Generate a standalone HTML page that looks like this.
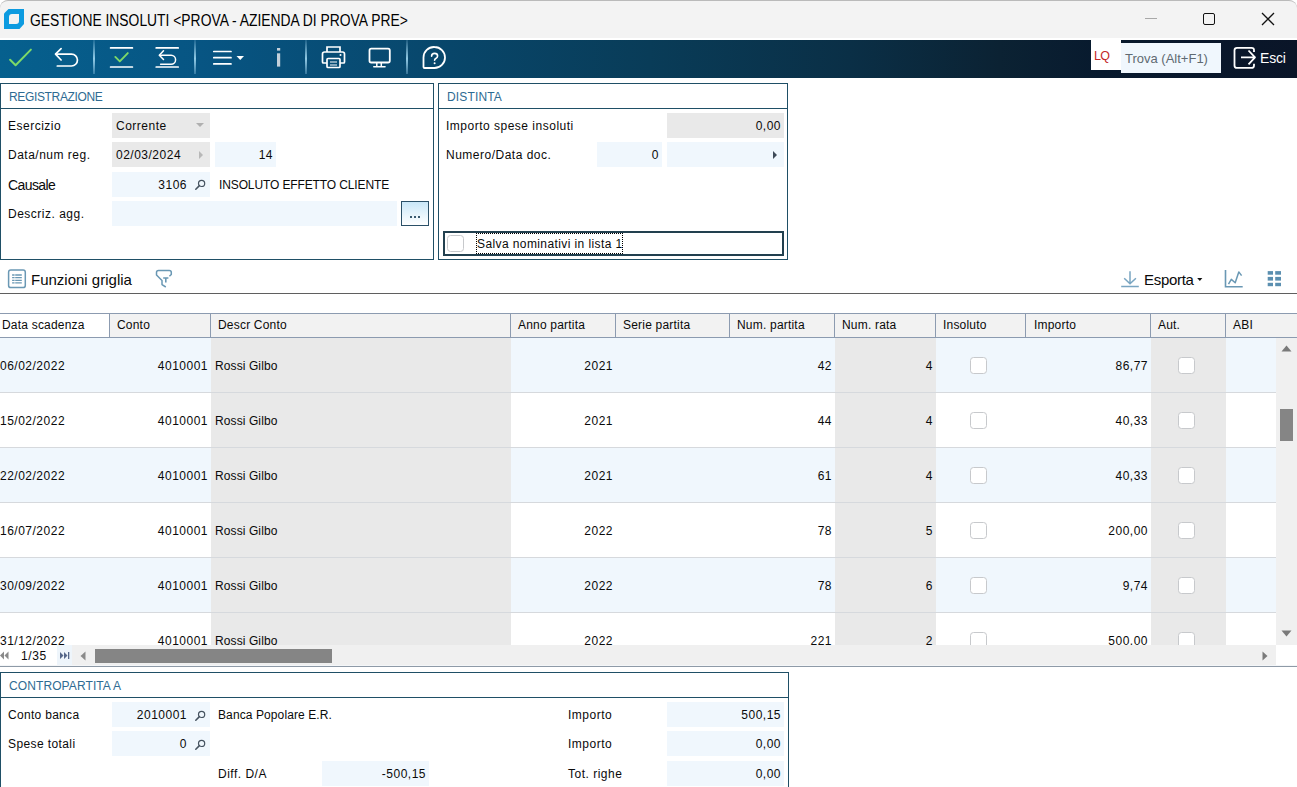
<!DOCTYPE html>
<html><head><meta charset="utf-8">
<style>
*{margin:0;padding:0;box-sizing:border-box}
html,body{width:1297px;height:787px;overflow:hidden;background:#fff;font-family:"Liberation Sans",sans-serif;color:#000}
.a{position:absolute}
.t{position:absolute;white-space:nowrap;font-size:12px;line-height:14px;letter-spacing:0.5px;color:#0a0a0a}
.r{text-align:right}
.cb{position:absolute;width:17px;height:17px;border:1.8px solid #c7c9cc;border-radius:3.5px;background:#fff}
.sep{position:absolute;top:40px;width:2px;height:34px;background:linear-gradient(180deg,rgba(160,210,240,0.15),rgba(160,215,240,0.9) 55%,rgba(160,210,240,0.3))}
</style></head><body>
<div class="a" style="left:0;top:0;width:1297px;height:38px;background:#f3f3f3;border-top:1px solid #bababa;border-radius:8px 8px 0 0"></div>
<svg class="a" style="left:0;top:0" width="30" height="36" viewBox="0 0 30 36"><path d="M8.5 9H24V24L19.5 29H4V13.5Z" fill="#0d9be0"/><path d="M12 14H19V21Q19 24 16 24H9V17Q9 14 12 14Z" fill="#f3f3f3"/></svg>
<div class="t" style="left:30px;top:11.5px;font-size:15.6px;line-height:18px;letter-spacing:0px;color:#000;transform:scaleX(0.889);transform-origin:0 0">GESTIONE INSOLUTI &lt;PROVA - AZIENDA DI PROVA PRE&gt;</div>
<div class="a" style="left:1145px;top:18px;width:12px;height:1px;background:#a8a8a8"></div>
<div class="a" style="left:1203px;top:13px;width:12px;height:12px;border:1.3px solid #111;border-radius:2px"></div>
<svg class="a" style="left:1261px;top:12px" width="14" height="14" viewBox="0 0 14 14"><path d="M1 1L13 13M13 1L1 13" stroke="#111" stroke-width="1.3"/></svg>
<div class="a" style="left:0;top:40px;width:1297px;height:38px;background:linear-gradient(90deg,#06608e 0px,#075583 200px,#08466a 450px,#093c58 650px,#0a2f46 850px,#0b2233 1000px,#081a2e 1100px,#0a1528 1297px)"></div>
<div class="sep" style="left:93px"></div>
<div class="sep" style="left:194px"></div>
<div class="sep" style="left:305px"></div>
<div class="sep" style="left:406px"></div>
<svg class="a" style="left:0;top:40px" width="460" height="38" viewBox="0 40 460 38">
 <path d="M10.1 59.7L15.6 65.2L30.9 49.6" fill="none" stroke="#7dd968" stroke-width="2" stroke-linecap="round" stroke-linejoin="round"/>
 <g fill="none" stroke="#fff" stroke-width="1.7" stroke-linecap="round" stroke-linejoin="round">
  <path d="M61.1 48.6L55.5 54.1L61.1 60"/><path d="M55.8 54.1H71.5A5.95 5.95 0 0 1 71.5 66H57.3"/>
  <path d="M110.6 47.9H132.4M110.6 67H132.4"/>
  <path d="M156.2 47.9H178.2M156.2 67H178.2"/>
 </g>
 <g fill="none" stroke="#fff" stroke-width="1.5" stroke-linecap="round" stroke-linejoin="round">
  <path d="M163.5 50.7L159.3 55.2L163.5 59.5"/><path d="M159.6 55.2H171.1A4.5 4.5 0 0 1 171.1 64.2H160.6"/>
 </g>
 <path d="M115.3 56.9L119.8 61.4L127.8 53.1" fill="none" stroke="#7dd968" stroke-width="1.9" stroke-linecap="round" stroke-linejoin="round"/>
 <g fill="none" stroke="#fff" stroke-width="1.7" stroke-linecap="round">
  <path d="M213.8 51.5H231M213.8 57.7H231M213.8 63.9H231"/>
 </g>
 <path d="M236.5 56H244L240.25 60Z" fill="#fff"/>
 <rect x="277" y="48" width="3.2" height="2.6" fill="#c3d0da"/><rect x="277" y="53.3" width="3.2" height="13.3" fill="#c3d0da"/>
 <g fill="none" stroke="#fff" stroke-width="1.7">
  <path d="M327 52V47H340V52"/>
  <path d="M327 63H323.5Q322.5 63 322.5 62V54Q322.5 52 324.5 52H342.5Q344.5 52 344.5 54V62Q344.5 63 343.5 63H340"/>
  <rect x="327" y="58.5" width="13" height="9" rx="1"/>
  <path d="M330 62H337M330 65H337" stroke-width="1.2"/>
 </g>
 <circle cx="340.5" cy="55" r="1" fill="#fff"/>
 <g fill="none" stroke="#fff" stroke-width="1.8">
  <rect x="369.5" y="48.7" width="20.3" height="13.8" rx="1.8"/>
  <path d="M376.8 63V66.5M381.3 63V66.5" stroke-width="1.5"/><path d="M373.8 66.8H385" stroke-linecap="round" stroke-width="1.6"/>
 </g>
 <g fill="none" stroke="#fff" stroke-width="1.8">
  <path d="M434.5 47A10.5 10.5 0 1 1 434.5 68H424.5Q423.5 68 423.5 67V57.5A10.5 10.5 0 0 1 434.5 47Z"/>
 </g>
 <path d="M431.6 56.2Q431.6 53.4 434.6 53.4Q437.6 53.4 437.6 56Q437.6 57.6 435.8 58.5Q434.6 59.1 434.6 60.2" fill="none" stroke="#fff" stroke-width="1.6" stroke-linecap="round"/><circle cx="434.6" cy="63.2" r="1" fill="#fff"/>
</svg>
<div class="a" style="left:1091px;top:40px;width:30px;height:30px;background:#fff"></div>
<div class="t" style="left:1094px;top:49px;font-size:12.5px;letter-spacing:-0.8px;color:#c42828">LQ</div>
<div class="a" style="left:1121px;top:43px;width:100px;height:30px;background:#f0f7fd"></div>
<div class="t" style="left:1125px;top:51px;font-size:13px;line-height:16px;letter-spacing:0px;color:#5f6a72">Trova (Alt+F1)</div>
<svg class="a" style="left:1232px;top:45px" width="26" height="26" viewBox="0 0 26 26"><g fill="none" stroke="#fff" stroke-width="1.8"><path d="M22 7V5Q22 2.8 19.5 2.8H5Q2.5 2.8 2.5 5.3V20.4Q2.5 22.9 5 22.9H19.5Q22 22.9 22 20.4V18.8"/><path d="M9 12.4H23M16.5 5.5L23 12.4L16.5 19.3" stroke-linejoin="round"/></g></svg>
<div class="t" style="left:1260px;top:49px;font-size:14px;line-height:18px;letter-spacing:-0.2px;color:#fff">Esci</div>
<div class="a" style="left:0px;top:83px;width:434px;height:177px;border:1px solid #1f4f66"></div>
<div class="a" style="left:1px;top:108px;width:432px;height:1px;background:#1f4f66"></div>
<div class="t" style="left:9px;top:90px;letter-spacing:-0.35px;color:#2e6b92">REGISTRAZIONE</div>
<div class="t" style="left:8px;top:119px">Esercizio</div>
<div class="a" style="left:112px;top:113px;width:98px;height:25px;background:#e9e9e9"></div>
<div class="t" style="left:116px;top:119px">Corrente</div>
<svg class="a" style="left:195px;top:122px" width="10" height="6"><path d="M1 1H9L5 5Z" fill="#b0b0b0"/></svg>
<div class="t" style="left:8px;top:148px">Data/num reg.</div>
<div class="a" style="left:112px;top:142px;width:98px;height:25px;background:#e9e9e9"></div>
<div class="t" style="left:116px;top:148px">02/03/2024</div>
<svg class="a" style="left:198px;top:150px" width="6" height="10"><path d="M1 1V9L5 5Z" fill="#b8b8b8"/></svg>
<div class="a" style="left:215px;top:142px;width:61px;height:25px;background:#f0f7fd"></div>
<div class="t r" style="left:215px;top:148px;width:58px">14</div>
<div class="t" style="left:8px;top:177px;font-size:14px;line-height:16px;letter-spacing:-0.6px">Causale</div>
<div class="a" style="left:112px;top:172px;width:98px;height:25px;background:#f0f7fd"></div>
<div class="t r" style="left:112px;top:178px;width:75px">3106</div>
<svg class="a" style="left:194px;top:178px" width="12" height="12" viewBox="0 0 12 12"><circle cx="7.6" cy="5.4" r="3.1" fill="none" stroke="#45525f" stroke-width="1.2"/><path d="M5.4 7.6L1.8 11.2" stroke="#45525f" stroke-width="1.5" stroke-linecap="round"/></svg>
<div class="t" style="left:219px;top:178px;letter-spacing:-0.12px">INSOLUTO EFFETTO CLIENTE</div>
<div class="t" style="left:8px;top:207px">Descriz. agg.</div>
<div class="a" style="left:112px;top:201px;width:285px;height:25px;background:#f0f7fd"></div>
<div class="a" style="left:401px;top:201px;width:28px;height:25px;border:1px solid #2a5068;background:linear-gradient(180deg,#c9e7f8,#ffffff)"></div>
<div class="a" style="left:410px;top:216px;width:2px;height:2px;background:#3a5a70"></div>
<div class="a" style="left:414px;top:216px;width:2px;height:2px;background:#3a5a70"></div>
<div class="a" style="left:418px;top:216px;width:2px;height:2px;background:#3a5a70"></div>
<div class="a" style="left:438px;top:83px;width:350px;height:177px;border:1px solid #1f4f66"></div>
<div class="a" style="left:439px;top:108px;width:348px;height:1px;background:#1f4f66"></div>
<div class="t" style="left:447px;top:90px;letter-spacing:0.15px;color:#2e6b92">DISTINTA</div>
<div class="t" style="left:446px;top:119px">Importo spese insoluti</div>
<div class="a" style="left:667px;top:113px;width:117px;height:25px;background:#e9e9e9"></div>
<div class="t r" style="left:667px;top:119px;width:114px">0,00</div>
<div class="t" style="left:446px;top:148px">Numero/Data doc.</div>
<div class="a" style="left:597px;top:142px;width:65px;height:25px;background:#f0f7fd"></div>
<div class="t r" style="left:597px;top:148px;width:62px">0</div>
<div class="a" style="left:667px;top:142px;width:117px;height:25px;background:#f0f7fd"></div>
<svg class="a" style="left:772px;top:150px" width="6" height="10"><path d="M1 1V9L5 5Z" fill="#3e4a58"/></svg>
<div class="a" style="left:443px;top:231px;width:341px;height:25px;border:2px solid #22404f"></div>
<div class="cb" style="left:447px;top:235px;width:17px;height:17px"></div>
<div class="a" style="left:476px;top:233px;width:147px;height:21px;border:1px dotted #000"></div>
<div class="t" style="left:477px;top:237px;letter-spacing:0.4px">Salva nominativi in lista 1</div>
<svg class="a" style="left:0;top:260px" width="30" height="32" viewBox="0 260 30 32"><rect x="8.6" y="270.1" width="16.7" height="17.5" rx="2.2" fill="none" stroke="#6a98b4" stroke-width="1.5"/><path d="M12.1 275H14.6M15.2 275H21.8M12.1 277.6H14.6M15.2 277.6H21.8M12.1 280.3H14.6M15.2 280.3H21.8M12.1 282.9H14.6M15.2 282.9H21.8" stroke="#6a98b4" stroke-width="1.3"/></svg>
<div class="t" style="left:31px;top:271px;font-size:15px;line-height:18px;letter-spacing:0px">Funzioni griglia</div>
<svg class="a" style="left:150px;top:265px" width="30" height="27" viewBox="150 265 30 27"><path d="M165.8 287L162 284.6V280.5L156.5 275V272.5Q156.5 270.5 158.5 270.5H169.3Q171.3 270.5 171.3 272.5V274.5L169.4 276.3" fill="none" stroke="#6a98b4" stroke-width="1.5" stroke-linejoin="round"/><path d="M163.2 278H168.4M165.8 278V282.5" stroke="#6a98b4" stroke-width="1.6"/></svg>
<svg class="a" style="left:1115px;top:265px" width="30" height="27" viewBox="1115 265 30 27"><path d="M1130 271.2V283.3M1124.2 278.2L1130 283.8L1135.9 278.2M1121.2 286.4H1138.8" fill="none" stroke="#79a5c1" stroke-width="1.5"/></svg>
<div class="t" style="left:1144px;top:271px;font-size:15px;line-height:18px;letter-spacing:-0.3px">Esporta</div>
<svg class="a" style="left:1196px;top:277px" width="8" height="5" viewBox="1196 277 8 5"><path d="M1197.2 278H1202.4L1199.8 281Z" fill="#111"/></svg>
<svg class="a" style="left:1218px;top:265px" width="30" height="27" viewBox="1218 265 30 27"><path d="M1225.5 270V286.8H1242.7" fill="none" stroke="#6a98b4" stroke-width="1.6"/><path d="M1228.5 284.2L1231.3 279.4L1235.2 282.8L1238.8 271.9L1241.6 275.6" fill="none" stroke="#6a98b4" stroke-width="1.5" stroke-linejoin="round"/></svg>
<svg class="a" style="left:1260px;top:265px" width="30" height="27" viewBox="1260 265 30 27"><g fill="#5b8fb0"><rect x="1267.7" y="271.1" width="5.3" height="3.6"/><rect x="1275.2" y="271.1" width="5.8" height="3.6"/><rect x="1267.7" y="276.9" width="5.3" height="3.7"/><rect x="1275.2" y="276.9" width="5.8" height="3.7"/><rect x="1267.7" y="282.8" width="5.3" height="3.4"/><rect x="1275.2" y="282.8" width="5.8" height="3.4"/></g></svg>
<div class="a" style="left:0px;top:293px;width:1297px;height:1px;background:#5f5f5f"></div>
<div class="a" style="left:0px;top:338px;width:1276px;height:54px;background:#f0f7fd"></div>
<div class="a" style="left:0px;top:393px;width:1276px;height:54px;background:#fff"></div>
<div class="a" style="left:0px;top:448px;width:1276px;height:54px;background:#f0f7fd"></div>
<div class="a" style="left:0px;top:503px;width:1276px;height:54px;background:#fff"></div>
<div class="a" style="left:0px;top:558px;width:1276px;height:54px;background:#f0f7fd"></div>
<div class="a" style="left:0px;top:613px;width:1276px;height:32px;background:#fff"></div>
<div class="a" style="left:211px;top:338px;width:300px;height:307px;background:#e9e9e9"></div>
<div class="a" style="left:835px;top:338px;width:101px;height:307px;background:#e9e9e9"></div>
<div class="a" style="left:1151px;top:338px;width:75px;height:307px;background:#e9e9e9"></div>
<div class="a" style="left:0px;top:392px;width:1276px;height:1px;background:#d6d9dd"></div>
<div class="a" style="left:0px;top:447px;width:1276px;height:1px;background:#d6d9dd"></div>
<div class="a" style="left:0px;top:502px;width:1276px;height:1px;background:#d6d9dd"></div>
<div class="a" style="left:0px;top:557px;width:1276px;height:1px;background:#d6d9dd"></div>
<div class="a" style="left:0px;top:612px;width:1276px;height:1px;background:#d6d9dd"></div>
<div class="a" style="left:0;top:313px;width:1297px;height:25px;background:#f2f2f2;border-top:1px solid #8c9bb0;border-bottom:1px solid #8c9bb0"></div>
<div class="a" style="left:0px;top:314px;width:109px;height:23px;background:#fff"></div>
<div class="a" style="left:109px;top:313px;width:1px;height:25px;background:#8c9bb0"></div>
<div class="a" style="left:210px;top:313px;width:1px;height:25px;background:#8c9bb0"></div>
<div class="a" style="left:510px;top:313px;width:1px;height:25px;background:#8c9bb0"></div>
<div class="a" style="left:615px;top:313px;width:1px;height:25px;background:#8c9bb0"></div>
<div class="a" style="left:729px;top:313px;width:1px;height:25px;background:#8c9bb0"></div>
<div class="a" style="left:834px;top:313px;width:1px;height:25px;background:#8c9bb0"></div>
<div class="a" style="left:935px;top:313px;width:1px;height:25px;background:#8c9bb0"></div>
<div class="a" style="left:1025px;top:313px;width:1px;height:25px;background:#8c9bb0"></div>
<div class="a" style="left:1150px;top:313px;width:1px;height:25px;background:#8c9bb0"></div>
<div class="a" style="left:1225px;top:313px;width:1px;height:25px;background:#8c9bb0"></div>
<div class="t" style="left:2px;top:318px;letter-spacing:0.2px">Data scadenza</div>
<div class="t" style="left:117px;top:318px;letter-spacing:0.2px">Conto</div>
<div class="t" style="left:218px;top:318px;letter-spacing:0.2px">Descr Conto</div>
<div class="t" style="left:518px;top:318px;letter-spacing:0.2px">Anno partita</div>
<div class="t" style="left:623px;top:318px;letter-spacing:0.2px">Serie partita</div>
<div class="t" style="left:737px;top:318px;letter-spacing:0.2px">Num. partita</div>
<div class="t" style="left:842px;top:318px;letter-spacing:0.2px">Num. rata</div>
<div class="t" style="left:943px;top:318px;letter-spacing:0.2px">Insoluto</div>
<div class="t" style="left:1034px;top:318px;letter-spacing:0.2px">Importo</div>
<div class="t" style="left:1158px;top:318px;letter-spacing:0.2px">Aut.</div>
<div class="t" style="left:1233px;top:318px;letter-spacing:0.2px">ABI</div>
<div class="t" style="left:0px;top:359px">06/02/2022</div>
<div class="t r" style="left:110px;top:359px;width:98px">4010001</div>
<div class="t" style="left:215px;top:359px;letter-spacing:0.1px">Rossi Gilbo</div>
<div class="t r" style="left:511px;top:359px;width:102px">2021</div>
<div class="t r" style="left:730px;top:359px;width:102px">42</div>
<div class="t r" style="left:835px;top:359px;width:98px">4</div>
<div class="t r" style="left:1026px;top:359px;width:122px">86,77</div>
<div class="cb" style="left:970px;top:357px"></div>
<div class="cb" style="left:1178px;top:357px"></div>
<div class="t" style="left:0px;top:414px">15/02/2022</div>
<div class="t r" style="left:110px;top:414px;width:98px">4010001</div>
<div class="t" style="left:215px;top:414px;letter-spacing:0.1px">Rossi Gilbo</div>
<div class="t r" style="left:511px;top:414px;width:102px">2021</div>
<div class="t r" style="left:730px;top:414px;width:102px">44</div>
<div class="t r" style="left:835px;top:414px;width:98px">4</div>
<div class="t r" style="left:1026px;top:414px;width:122px">40,33</div>
<div class="cb" style="left:970px;top:412px"></div>
<div class="cb" style="left:1178px;top:412px"></div>
<div class="t" style="left:0px;top:469px">22/02/2022</div>
<div class="t r" style="left:110px;top:469px;width:98px">4010001</div>
<div class="t" style="left:215px;top:469px;letter-spacing:0.1px">Rossi Gilbo</div>
<div class="t r" style="left:511px;top:469px;width:102px">2021</div>
<div class="t r" style="left:730px;top:469px;width:102px">61</div>
<div class="t r" style="left:835px;top:469px;width:98px">4</div>
<div class="t r" style="left:1026px;top:469px;width:122px">40,33</div>
<div class="cb" style="left:970px;top:467px"></div>
<div class="cb" style="left:1178px;top:467px"></div>
<div class="t" style="left:0px;top:524px">16/07/2022</div>
<div class="t r" style="left:110px;top:524px;width:98px">4010001</div>
<div class="t" style="left:215px;top:524px;letter-spacing:0.1px">Rossi Gilbo</div>
<div class="t r" style="left:511px;top:524px;width:102px">2022</div>
<div class="t r" style="left:730px;top:524px;width:102px">78</div>
<div class="t r" style="left:835px;top:524px;width:98px">5</div>
<div class="t r" style="left:1026px;top:524px;width:122px">200,00</div>
<div class="cb" style="left:970px;top:522px"></div>
<div class="cb" style="left:1178px;top:522px"></div>
<div class="t" style="left:0px;top:579px">30/09/2022</div>
<div class="t r" style="left:110px;top:579px;width:98px">4010001</div>
<div class="t" style="left:215px;top:579px;letter-spacing:0.1px">Rossi Gilbo</div>
<div class="t r" style="left:511px;top:579px;width:102px">2022</div>
<div class="t r" style="left:730px;top:579px;width:102px">78</div>
<div class="t r" style="left:835px;top:579px;width:98px">6</div>
<div class="t r" style="left:1026px;top:579px;width:122px">9,74</div>
<div class="cb" style="left:970px;top:577px"></div>
<div class="cb" style="left:1178px;top:577px"></div>
<div class="t" style="left:0px;top:634px">31/12/2022</div>
<div class="t r" style="left:110px;top:634px;width:98px">4010001</div>
<div class="t" style="left:215px;top:634px;letter-spacing:0.1px">Rossi Gilbo</div>
<div class="t r" style="left:511px;top:634px;width:102px">2022</div>
<div class="t r" style="left:730px;top:634px;width:102px">221</div>
<div class="t r" style="left:835px;top:634px;width:98px">2</div>
<div class="t r" style="left:1026px;top:634px;width:122px">500,00</div>
<div class="cb" style="left:970px;top:632px"></div>
<div class="cb" style="left:1178px;top:632px"></div>
<div class="a" style="left:0px;top:645px;width:1297px;height:22px;background:#fff"></div>
<div class="a" style="left:1276px;top:338px;width:21px;height:307px;background:#f0f0f0"></div>
<svg class="a" style="left:1281px;top:345px" width="11" height="7"><path d="M0.5 6.5H10.5L5.5 0.5Z" fill="#7a7a7a"/></svg>
<div class="a" style="left:1280px;top:409px;width:13px;height:32px;background:#858585"></div>
<svg class="a" style="left:1281px;top:630px" width="11" height="7"><path d="M0.5 0.5H10.5L5.5 6.5Z" fill="#7a7a7a"/></svg>
<div class="a" style="left:72px;top:645px;width:1204px;height:20px;background:#f0f0f0"></div>
<div class="a" style="left:57px;top:645px;width:15px;height:20px;background:#eef5fb"></div>
<svg class="a" style="left:0;top:651px" width="9" height="9"><path d="M4 0.5V8.5L0 4.5Z M8.5 0.5V8.5L4.5 4.5Z" fill="#8a8a8a"/></svg>
<div class="t" style="left:21px;top:649px;letter-spacing:0.6px">1/35</div>
<svg class="a" style="left:60px;top:652px" width="10" height="8"><path d="M0 0V7L3.5 3.5Z M4 0V7L7.5 3.5Z" fill="#56688a"/><rect x="8" y="0" width="1.3" height="7" fill="#56688a"/></svg>
<svg class="a" style="left:80px;top:651px" width="6" height="10"><path d="M5.5 0.5V9.5L0.5 5Z" fill="#8a8a8a"/></svg>
<div class="a" style="left:95px;top:649px;width:237px;height:14px;background:#858585"></div>
<svg class="a" style="left:1262px;top:651px" width="7" height="10"><path d="M0.5 0.5V9.5L5.5 5Z" fill="#7a7a7a"/></svg>
<div class="a" style="left:0px;top:665px;width:1297px;height:1px;background:#f4f6f8"></div>
<div class="a" style="left:0px;top:666px;width:1297px;height:1px;background:#8e9aa7"></div>
<div class="a" style="left:0px;top:672px;width:789px;height:130px;border:1px solid #1f4f66"></div>
<div class="a" style="left:1px;top:697px;width:787px;height:1px;background:#1f4f66"></div>
<div class="t" style="left:9px;top:679px;letter-spacing:0.1px;color:#2e6b92">CONTROPARTITA A</div>
<div class="t" style="left:8px;top:708px;letter-spacing:0.3px">Conto banca</div>
<div class="a" style="left:112px;top:702px;width:98px;height:25px;background:#f0f7fd"></div>
<div class="t r" style="left:112px;top:708px;width:75px">2010001</div>
<svg class="a" style="left:194px;top:709px" width="12" height="12" viewBox="0 0 12 12"><circle cx="7.6" cy="5.4" r="3.1" fill="none" stroke="#45525f" stroke-width="1.2"/><path d="M5.4 7.6L1.8 11.2" stroke="#45525f" stroke-width="1.5" stroke-linecap="round"/></svg>
<div class="t" style="left:218px;top:708px;letter-spacing:0.1px">Banca Popolare E.R.</div>
<div class="t" style="left:8px;top:737px;letter-spacing:0.4px">Spese totali</div>
<div class="a" style="left:112px;top:731px;width:98px;height:25px;background:#f0f7fd"></div>
<div class="t r" style="left:112px;top:737px;width:75px">0</div>
<svg class="a" style="left:194px;top:738px" width="12" height="12" viewBox="0 0 12 12"><circle cx="7.6" cy="5.4" r="3.1" fill="none" stroke="#45525f" stroke-width="1.2"/><path d="M5.4 7.6L1.8 11.2" stroke="#45525f" stroke-width="1.5" stroke-linecap="round"/></svg>
<div class="t" style="left:218px;top:767px">Diff. D/A</div>
<div class="a" style="left:322px;top:761px;width:107px;height:25px;background:#f0f7fd"></div>
<div class="t r" style="left:322px;top:767px;width:104px">-500,15</div>
<div class="t" style="left:568px;top:708px">Importo</div>
<div class="a" style="left:667px;top:702px;width:117px;height:25px;background:#f0f7fd"></div>
<div class="t r" style="left:667px;top:708px;width:114px">500,15</div>
<div class="t" style="left:568px;top:737px">Importo</div>
<div class="a" style="left:667px;top:731px;width:117px;height:25px;background:#f0f7fd"></div>
<div class="t r" style="left:667px;top:737px;width:114px">0,00</div>
<div class="t" style="left:568px;top:767px">Tot. righe</div>
<div class="a" style="left:667px;top:761px;width:117px;height:25px;background:#f0f7fd"></div>
<div class="t r" style="left:667px;top:767px;width:114px">0,00</div>
</body></html>
